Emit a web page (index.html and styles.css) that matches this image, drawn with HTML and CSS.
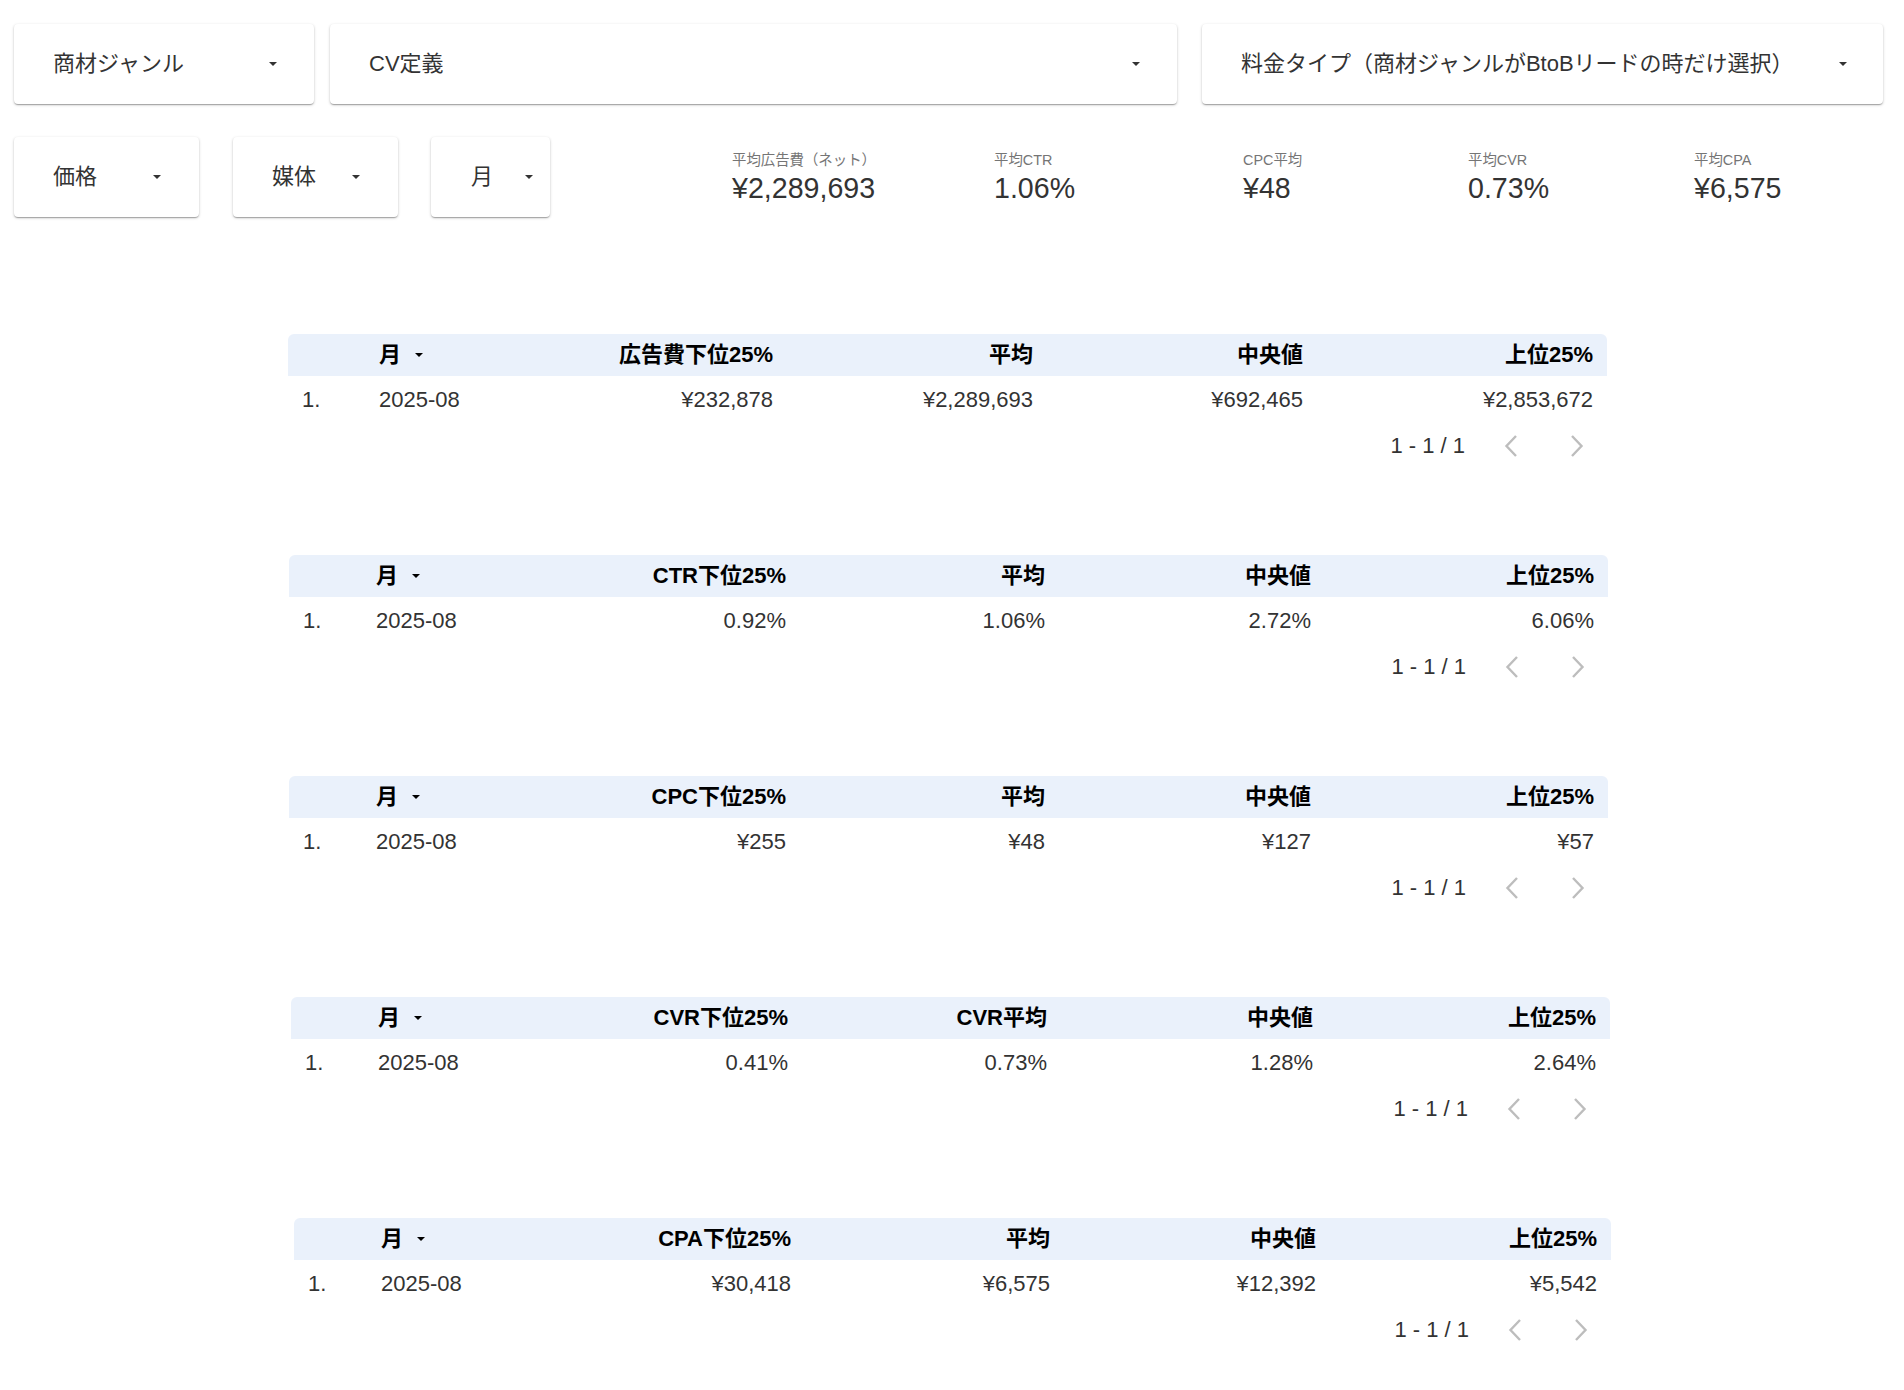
FILE: index.html
```html
<!DOCTYPE html>
<html lang="ja">
<head>
<meta charset="utf-8">
<title>Report</title>
<link rel="stylesheet" href="styles.css">
</head>
<body>
<div class="page">
  <div class="filters-top">
    <div class="dd dd-genre"><span class="dd-text">商材ジャンル</span><i class="caret"></i></div>
    <div class="dd dd-cv"><span class="dd-text">CV定義</span><i class="caret"></i></div>
    <div class="dd dd-fee"><span class="dd-text">料金タイプ（商材ジャンルがBtoBリードの時だけ選択）</span><i class="caret"></i></div>
  </div>
  <div class="filters-second">
    <div class="dd dd-price"><span class="dd-text">価格</span><i class="caret"></i></div>
    <div class="dd dd-media"><span class="dd-text">媒体</span><i class="caret"></i></div>
    <div class="dd dd-month"><span class="dd-text">月</span><i class="caret"></i></div>
    <div class="scores">
      <div class="score s1"><div class="score-label">平均広告費（ネット）</div><div class="score-value">¥2,289,693</div></div>
      <div class="score s2"><div class="score-label">平均CTR</div><div class="score-value">1.06%</div></div>
      <div class="score s3"><div class="score-label">CPC平均</div><div class="score-value">¥48</div></div>
      <div class="score s4"><div class="score-label">平均CVR</div><div class="score-value">0.73%</div></div>
      <div class="score s5"><div class="score-label">平均CPA</div><div class="score-value">¥6,575</div></div>
    </div>
  </div>

  <div class="tables">
    <div class="tbl tbl-1">
      <div class="thead grid-a">
        <div class="cell"></div>
        <div class="cell month-h">月<i class="caret caret-h"></i></div>
        <div class="cell num">広告費下位25%</div>
        <div class="cell num">平均</div>
        <div class="cell num">中央値</div>
        <div class="cell num">上位25%</div>
      </div>
      <div class="trow grid-a">
        <div class="cell">1.</div>
        <div class="cell">2025-08</div>
        <div class="cell num">¥232,878</div>
        <div class="cell num">¥2,289,693</div>
        <div class="cell num">¥692,465</div>
        <div class="cell num">¥2,853,672</div>
      </div>
      <div class="pager">
        <span class="pager-text">1 - 1 / 1</span>
        <span class="pg-btn pg-prev"><svg width="14" height="24" viewBox="0 0 14 24"><path d="M12 2 L2.5 12 L12 22" fill="none" stroke="#bdbdbd" stroke-width="2.4"/></svg></span>
        <span class="pg-btn pg-next"><svg width="14" height="24" viewBox="0 0 14 24"><path d="M2 2 L11.5 12 L2 22" fill="none" stroke="#bdbdbd" stroke-width="2.4"/></svg></span>
      </div>
    </div>

    <div class="tbl tbl-2">
      <div class="thead grid-b">
        <div class="cell"></div>
        <div class="cell month-h">月<i class="caret caret-h"></i></div>
        <div class="cell num">CTR下位25%</div>
        <div class="cell num">平均</div>
        <div class="cell num">中央値</div>
        <div class="cell num">上位25%</div>
      </div>
      <div class="trow grid-b">
        <div class="cell">1.</div>
        <div class="cell">2025-08</div>
        <div class="cell num">0.92%</div>
        <div class="cell num">1.06%</div>
        <div class="cell num">2.72%</div>
        <div class="cell num">6.06%</div>
      </div>
      <div class="pager">
        <span class="pager-text">1 - 1 / 1</span>
        <span class="pg-btn pg-prev"><svg width="14" height="24" viewBox="0 0 14 24"><path d="M12 2 L2.5 12 L12 22" fill="none" stroke="#bdbdbd" stroke-width="2.4"/></svg></span>
        <span class="pg-btn pg-next"><svg width="14" height="24" viewBox="0 0 14 24"><path d="M2 2 L11.5 12 L2 22" fill="none" stroke="#bdbdbd" stroke-width="2.4"/></svg></span>
      </div>
    </div>

    <div class="tbl tbl-3">
      <div class="thead grid-b">
        <div class="cell"></div>
        <div class="cell month-h">月<i class="caret caret-h"></i></div>
        <div class="cell num">CPC下位25%</div>
        <div class="cell num">平均</div>
        <div class="cell num">中央値</div>
        <div class="cell num">上位25%</div>
      </div>
      <div class="trow grid-b">
        <div class="cell">1.</div>
        <div class="cell">2025-08</div>
        <div class="cell num">¥255</div>
        <div class="cell num">¥48</div>
        <div class="cell num">¥127</div>
        <div class="cell num">¥57</div>
      </div>
      <div class="pager">
        <span class="pager-text">1 - 1 / 1</span>
        <span class="pg-btn pg-prev"><svg width="14" height="24" viewBox="0 0 14 24"><path d="M12 2 L2.5 12 L12 22" fill="none" stroke="#bdbdbd" stroke-width="2.4"/></svg></span>
        <span class="pg-btn pg-next"><svg width="14" height="24" viewBox="0 0 14 24"><path d="M2 2 L11.5 12 L2 22" fill="none" stroke="#bdbdbd" stroke-width="2.4"/></svg></span>
      </div>
    </div>

    <div class="tbl tbl-4">
      <div class="thead grid-b">
        <div class="cell"></div>
        <div class="cell month-h">月<i class="caret caret-h"></i></div>
        <div class="cell num">CVR下位25%</div>
        <div class="cell num">CVR平均</div>
        <div class="cell num">中央値</div>
        <div class="cell num">上位25%</div>
      </div>
      <div class="trow grid-b">
        <div class="cell">1.</div>
        <div class="cell">2025-08</div>
        <div class="cell num">0.41%</div>
        <div class="cell num">0.73%</div>
        <div class="cell num">1.28%</div>
        <div class="cell num">2.64%</div>
      </div>
      <div class="pager">
        <span class="pager-text">1 - 1 / 1</span>
        <span class="pg-btn pg-prev"><svg width="14" height="24" viewBox="0 0 14 24"><path d="M12 2 L2.5 12 L12 22" fill="none" stroke="#bdbdbd" stroke-width="2.4"/></svg></span>
        <span class="pg-btn pg-next"><svg width="14" height="24" viewBox="0 0 14 24"><path d="M2 2 L11.5 12 L2 22" fill="none" stroke="#bdbdbd" stroke-width="2.4"/></svg></span>
      </div>
    </div>

    <div class="tbl tbl-5">
      <div class="thead grid-b">
        <div class="cell"></div>
        <div class="cell month-h">月<i class="caret caret-h"></i></div>
        <div class="cell num">CPA下位25%</div>
        <div class="cell num">平均</div>
        <div class="cell num">中央値</div>
        <div class="cell num">上位25%</div>
      </div>
      <div class="trow grid-b">
        <div class="cell">1.</div>
        <div class="cell">2025-08</div>
        <div class="cell num">¥30,418</div>
        <div class="cell num">¥6,575</div>
        <div class="cell num">¥12,392</div>
        <div class="cell num">¥5,542</div>
      </div>
      <div class="pager">
        <span class="pager-text">1 - 1 / 1</span>
        <span class="pg-btn pg-prev"><svg width="14" height="24" viewBox="0 0 14 24"><path d="M12 2 L2.5 12 L12 22" fill="none" stroke="#bdbdbd" stroke-width="2.4"/></svg></span>
        <span class="pg-btn pg-next"><svg width="14" height="24" viewBox="0 0 14 24"><path d="M2 2 L11.5 12 L2 22" fill="none" stroke="#bdbdbd" stroke-width="2.4"/></svg></span>
      </div>
    </div>
  </div>
</div>
</body>
</html>
```
FILE: styles.css
```css
html, body {
  margin: 0;
  padding: 0;
  background: #ffffff;
}

body {
  font-family: "Liberation Sans", "Noto Sans CJK JP", sans-serif;
  color: #333333;
}

.page {
  padding-top: 24px;
}

/* ---------- dropdown filters ---------- */
.filters-top {
  display: flex;
  padding-left: 14px;
}

.filters-second {
  display: flex;
  align-items: flex-start;
  padding-left: 14px;
  margin-top: 33px;
}

.dd {
  box-sizing: border-box;
  height: 80px;
  display: flex;
  align-items: center;
  justify-content: space-between;
  padding: 0 37px 0 39px;
  background: #ffffff;
  border-radius: 4px;
  box-shadow: 0 1px 1px rgba(0, 0, 0, 0.14), 0 2px 1px -1px rgba(0, 0, 0, 0.12), 0 1px 3px rgba(0, 0, 0, 0.22);
  font-size: 22px;
  line-height: 26px;
  color: #333333;
  white-space: nowrap;
}

.dd-text {
  display: block;
}

.dd-genre { width: 300px; }
.dd-cv { width: 847px; margin-left: 16px; }
.dd-fee { width: 681px; margin-left: 25px; padding-right: 36px; }

.dd-price { width: 185px; padding-right: 38px; }
.dd-media { width: 165px; margin-left: 34px; padding-right: 38px; }
.dd-month { width: 119px; margin-left: 33px; padding-left: 40px; padding-right: 17px; }

.caret {
  display: block;
  width: 0;
  height: 0;
  border-left: 4px solid transparent;
  border-right: 4px solid transparent;
  border-top: 4px solid #333333;
}

/* ---------- scorecards ---------- */
.scores {
  display: flex;
  margin-left: 182px;
  padding-top: 15px;
}

.score { display: flex; flex-direction: column; }
.s1 { width: 262px; }
.s2 { width: 249px; }
.s3 { width: 225px; }
.s4 { width: 226px; }
.s5 { width: 200px; }

.score-label {
  font-size: 14.4px;
  line-height: 16px;
  color: #757575;
  white-space: nowrap;
}

.score-value {
  margin-top: 4px;
  font-size: 28.6px;
  line-height: 32px;
  color: #333333;
  white-space: nowrap;
}

/* ---------- tables ---------- */
.tables {
  display: flex;
  flex-direction: column;
  gap: 81px;
  margin-top: 117px;
}

.tbl { width: 1319px; }
.tbl-1 { margin-left: 288px; }
.tbl-2 { margin-left: 289px; }
.tbl-3 { margin-left: 289px; }
.tbl-4 { margin-left: 291px; }
.tbl-5 { margin-left: 294px; width: 1317px; }

.grid-a {
  display: grid;
  grid-template-columns: 77px 195px 227px 260px 270px 290px;
}

.grid-b {
  display: grid;
  grid-template-columns: 73px 210px 228px 259px 266px 1fr;
}

.thead {
  height: 42px;
  align-items: center;
  background: #eaf1fb;
  border-radius: 6px 6px 0 0;
  font-size: 22px;
  line-height: 26px;
  font-weight: bold;
  color: #000000;
}

.trow {
  box-sizing: border-box;
  height: 42px;
  padding-top: 5px;
  align-items: center;
  font-size: 22px;
  line-height: 26px;
  color: #333333;
}

.cell {
  padding: 0 14px;
  white-space: nowrap;
}

.num { text-align: right; }

.month-h {
  display: flex;
  align-items: center;
}

.caret-h {
  margin-left: 14px;
  border-top-color: #000000;
}

.pager {
  display: flex;
  justify-content: flex-end;
  align-items: center;
  height: 56px;
  padding-right: 10px;
  font-size: 22px;
  line-height: 26px;
  color: #333333;
}

.pg-btn {
  width: 40px;
  height: 40px;
  display: flex;
  align-items: center;
  justify-content: center;
}

.pg-prev { margin-left: 26px; }
.pg-next { margin-left: 26px; }
```
